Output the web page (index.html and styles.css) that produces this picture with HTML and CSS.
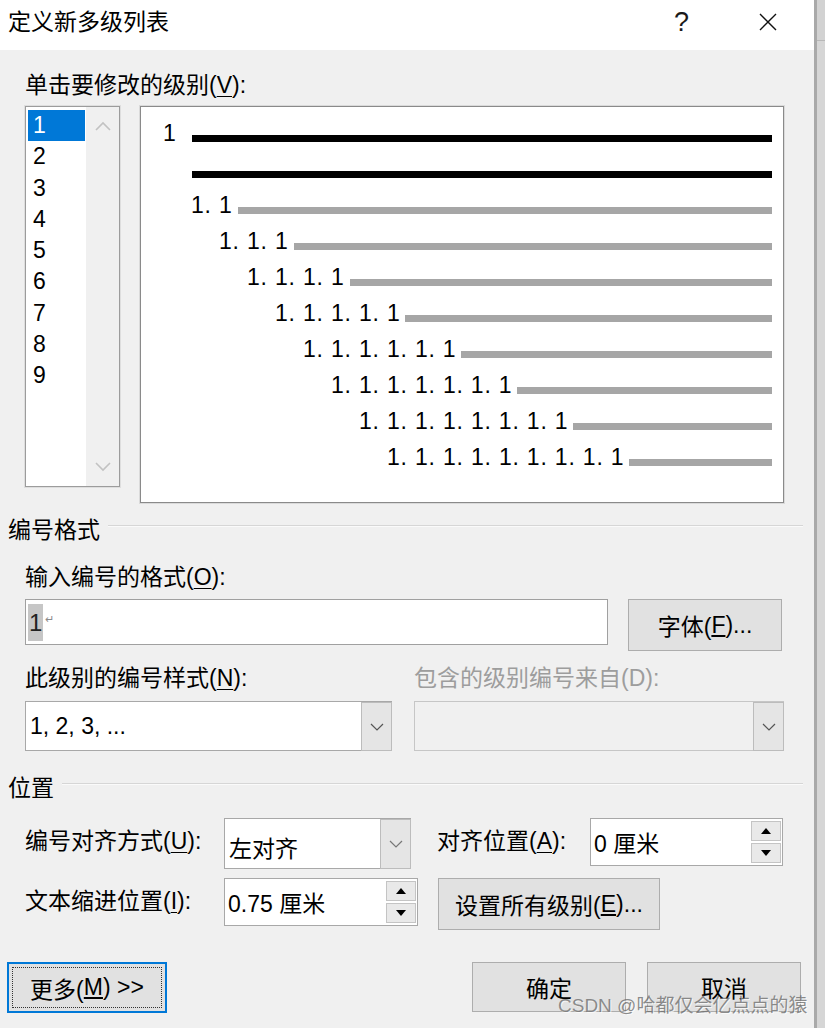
FILE: index.html
```html
<!DOCTYPE html>
<html lang="zh-CN">
<head>
    <meta charset="UTF-8">
    <meta name="viewport" content="width=device-width, initial-scale=1.0">
    <title>定义新多级列表</title>
    <link rel="stylesheet" href="styles.css">
</head>
<body>
<div class="screen">
    <div class="dialog">
        <div class="titlebar">
            <span class="title">定义新多级列表</span>
            <span class="help">?</span>
            <span class="close">
                <svg width="18" height="18" viewBox="0 0 18 18"><path d="M1 1 L17 17 M17 1 L1 17" stroke="#111" stroke-width="1.4" fill="none"/></svg>
            </span>
        </div>

        <div class="content">
            <div class="label top-label">单击要修改的级别(<u>V</u>):</div>
            <div class="level-area">
                <div class="level-list">
                    <ul class="levels">
                        <li class="selected">1</li>
                        <li>2</li>
                        <li>3</li>
                        <li>4</li>
                        <li>5</li>
                        <li>6</li>
                        <li>7</li>
                        <li>8</li>
                        <li>9</li>
                    </ul>
                    <div class="vscroll">
                        <svg width="16" height="10" viewBox="0 0 16 10"><polyline points="1,9 8,2 15,9" stroke="#c2c2c2" stroke-width="1.6" fill="none"/></svg>
                        <svg width="16" height="10" viewBox="0 0 16 10"><polyline points="1,1 8,8 15,1" stroke="#c2c2c2" stroke-width="1.6" fill="none"/></svg>
                    </div>
                </div>
                <div class="preview">
                    <div class="pv-row lv1"><span class="pv-num">1</span><span class="pv-line dark"></span></div>
                    <div class="pv-row lv1b"><span class="pv-line dark"></span></div>
                    <div class="pv-row lv2"><span class="pv-num">1. 1</span><span class="pv-line"></span></div>
                    <div class="pv-row lv3"><span class="pv-num">1. 1. 1</span><span class="pv-line"></span></div>
                    <div class="pv-row lv4"><span class="pv-num">1. 1. 1. 1</span><span class="pv-line"></span></div>
                    <div class="pv-row lv5"><span class="pv-num">1. 1. 1. 1. 1</span><span class="pv-line"></span></div>
                    <div class="pv-row lv6"><span class="pv-num">1. 1. 1. 1. 1. 1</span><span class="pv-line"></span></div>
                    <div class="pv-row lv7"><span class="pv-num">1. 1. 1. 1. 1. 1. 1</span><span class="pv-line"></span></div>
                    <div class="pv-row lv8"><span class="pv-num">1. 1. 1. 1. 1. 1. 1. 1</span><span class="pv-line"></span></div>
                    <div class="pv-row lv9"><span class="pv-num">1. 1. 1. 1. 1. 1. 1. 1. 1</span><span class="pv-line"></span></div>
                </div>
            </div>

            <div class="section section-format"><span>编号格式</span></div>
            <div class="group">
                <div class="label format-label">输入编号的格式(<u>O</u>):</div>
                <div class="format-row">
                    <div class="textbox format-box"><span class="sel">1</span><span class="para">↵</span></div>
                    <button class="btn font-btn">字体(<u>F</u>)...</button>
                </div>
                <div class="style-row">
                    <div class="style-col">
                        <div class="label">此级别的编号样式(<u>N</u>):</div>
                        <div class="combo">
                            <span class="combo-text">1, 2, 3, ...</span>
                            <span class="combo-btn">
                                <svg width="14" height="8" viewBox="0 0 14 8"><polyline points="1,1 7,7 13,1" stroke="#555" stroke-width="1.2" fill="none"/></svg>
                            </span>
                        </div>
                    </div>
                    <div class="style-col disabled">
                        <div class="label">包含的级别编号来自(D):</div>
                        <div class="combo">
                            <span class="combo-text"></span>
                            <span class="combo-btn">
                                <svg width="14" height="8" viewBox="0 0 14 8"><polyline points="1,1 7,7 13,1" stroke="#555" stroke-width="1.2" fill="none"/></svg>
                            </span>
                        </div>
                    </div>
                </div>
            </div>

            <div class="section section-pos"><span>位置</span></div>
            <div class="group">
                <div class="pos-row first">
                    <span class="label pos-label">编号对齐方式(<u>U</u>):</span>
                    <div class="combo align-combo">
                        <span class="combo-text">左对齐</span>
                        <span class="combo-btn">
                            <svg width="14" height="8" viewBox="0 0 14 8"><polyline points="1,1 7,7 13,1" stroke="#777" stroke-width="1.2" fill="none"/></svg>
                        </span>
                    </div>
                    <span class="label at-label">对齐位置(<u>A</u>):</span>
                    <div class="spin at-spin">
                        <span class="spin-text">0 厘米</span>
                        <span class="spin-btns">
                            <span class="spin-btn"><svg width="10" height="6" viewBox="0 0 10 6"><polygon points="0,6 5,0 10,6" fill="#000"/></svg></span>
                            <span class="spin-btn"><svg width="10" height="6" viewBox="0 0 10 6"><polygon points="0,0 5,6 10,0" fill="#000"/></svg></span>
                        </span>
                    </div>
                </div>
                <div class="pos-row second">
                    <span class="label pos-label">文本缩进位置(<u>I</u>):</span>
                    <div class="spin indent-spin">
                        <span class="spin-text">0.75 厘米</span>
                        <span class="spin-btns">
                            <span class="spin-btn"><svg width="10" height="6" viewBox="0 0 10 6"><polygon points="0,6 5,0 10,6" fill="#000"/></svg></span>
                            <span class="spin-btn"><svg width="10" height="6" viewBox="0 0 10 6"><polygon points="0,0 5,6 10,0" fill="#000"/></svg></span>
                        </span>
                    </div>
                    <button class="btn all-btn">设置所有级别(<u>E</u>)...</button>
                </div>
            </div>

            <div class="footer">
                <button class="btn more-btn"><span class="focus">更多(<u>M</u>) &gt;&gt;</span></button>
                <div class="footer-right">
                    <button class="btn ok-btn">确定</button>
                    <button class="btn ok-btn">取消</button>
                </div>
            </div>
        </div>

        <div class="watermark">CSDN @哈都仅会亿点点的猿</div>
    </div>
    <div class="behind"></div>
</div>
</body>
</html>
```

FILE: styles.css
```css
* { box-sizing: border-box; }

body {
    margin: 0;
    font-family: "Liberation Sans", "Noto Sans CJK SC", sans-serif;
    font-size: 23px;
    color: #000;
    background: #dcdcdc;
}

.screen {
    display: flex;
    width: 825px;
    height: 1028px;
    overflow: hidden;
}

.dialog {
    position: relative;
    width: 814px;
    height: 1028px;
    background: #f0f0f0;
    flex-shrink: 0;
}

.behind {
    flex: 1;
    border-left: 3px solid #a9a9a9;
    background: linear-gradient(#d2d2d2 0, #d2d2d2 40px, #b8b8b8 40px, #b8b8b8 41px, #d6d6d6 41px);
}

/* title bar */
.titlebar {
    height: 50px;
    background: #fff;
    display: flex;
    align-items: center;
    padding: 0 37px 6px 8px;
}
.title { line-height: 30px; }
.help {
    margin-left: auto;
    font-size: 27px;
    color: #1a1a1a;
    line-height: 30px;
}
.close {
    display: flex;
    margin-left: 70px;
}

/* content */
.content {
    padding: 0 13px 0 8px;
}
.label {
    line-height: 30px;
    white-space: nowrap;
}
.label u { text-decoration-thickness: 1px; text-underline-offset: 3px; }
.top-label {
    margin: 20px 0 0 17px;
}

.level-area {
    display: flex;
    align-items: flex-start;
    margin: 6px 0 0 17px;
}

.level-list {
    display: flex;
    width: 95px;
    height: 381px;
    background: #fff;
    border: 1px solid #9c9c9c;
    box-shadow: 0 0 0 1px #dedede;
}
.levels {
    list-style: none;
    margin: 0;
    padding: 3px 0 0 2px;
    width: 59px;
}
.levels li {
    height: 31.3px;
    line-height: 31.3px;
    padding-left: 5px;
}
.levels li.selected {
    background: #0078d7;
    color: #fff;
}
.vscroll {
    flex: 1;
    margin-left: 1px;
    background: #f0f0f0;
    display: flex;
    flex-direction: column;
    justify-content: space-between;
    align-items: center;
    padding: 14px 0;
}

.preview {
    margin-left: 20px;
    width: 644px;
    height: 397px;
    background: #fff;
    border: 1px solid #8a8a8a;
    box-shadow: 0 0 0 1px #dadada;
    padding: 13px 11px 0 0;
}
.pv-row {
    display: flex;
    align-items: center;
    height: 36px;
}
.pv-num {
    letter-spacing: 0.8px;
    line-height: 26px;
    margin-bottom: 11px;
    white-space: nowrap;
}
.pv-line {
    flex: 1;
    height: 7px;
    margin-left: 5px;
    background: #a6a6a6;
}
.pv-line.dark { background: #000; }
.lv1 { padding-left: 22px; }
.lv1 .pv-line { margin-left: 15px; }
.lv1b { padding-left: 51px; }
.lv1b .pv-line { margin-left: 0; }
.lv2 { padding-left: 50px; }
.lv3 { padding-left: 78px; }
.lv4 { padding-left: 106px; }
.lv5 { padding-left: 134px; }
.lv6 { padding-left: 162px; }
.lv7 { padding-left: 190px; }
.lv8 { padding-left: 218px; }
.lv9 { padding-left: 246px; }

/* section headers */
.section {
    display: flex;
    align-items: center;
    line-height: 30px;
    margin-right: -2px;
}
.section::after {
    content: "";
    flex: 1;
    margin: -8px 0 0 8px;
    border-top: 1px solid #d6d6d6;
    border-bottom: 1px solid #fafafa;
}
.section-format { margin-top: 12px; }
.section-pos { margin-top: 22px; }

.group { padding-left: 17px; }
.format-label { margin-top: 17px; }

.format-row {
    display: flex;
    align-items: flex-start;
    margin-top: 7px;
}
.textbox {
    background: #fff;
    border: 1px solid #a0a0a0;
}
.format-box {
    width: 583px;
    height: 46px;
    display: flex;
    align-items: center;
    padding-left: 2px;
}
.sel {
    background: #c6c6c6;
    color: #222;
    height: 37px;
    line-height: 37px;
    padding: 0 1px;
    font-size: 24px;
}
.para {
    font-size: 11px;
    color: #8a8a8a;
    align-self: flex-start;
    margin: 13px 0 0 2px;
}

.btn {
    font-family: inherit;
    font-size: 23px;
    color: #000;
    background: #e1e1e1;
    border: 1px solid #adadad;
    padding: 0;
    display: flex;
    align-items: center;
    justify-content: center;
}
.font-btn {
    width: 154px;
    height: 52px;
    margin-left: 20px;
}

.style-row {
    display: flex;
    margin-top: 12px;
}
.style-col {
    display: flex;
    flex-direction: column;
    width: 367px;
}
.style-col .combo { margin-top: 8px; }
.style-col.disabled {
    width: 370px;
    margin-left: 22px;
}
.style-col.disabled .label { color: #9d9d9d; }

.combo {
    display: flex;
    height: 50px;
    background: #fff;
    border: 1px solid #a8a8a8;
}
.combo-text {
    flex: 1;
    display: flex;
    align-items: center;
    padding-left: 4px;
    white-space: nowrap;
}
.combo-btn {
    width: 31px;
    display: flex;
    align-items: center;
    justify-content: center;
    background: #e5e5e5;
    border: 1px solid #bcbcbc;
    margin: 0 -1px -1px 0;
}
.disabled .combo {
    background: #f0f0f0;
    border-color: #c6c6c6;
}

.pos-row {
    display: flex;
    align-items: center;
}
.pos-row.first { margin-top: 15px; height: 51px; }
.pos-row.second { margin-top: 9px; height: 52px; }
.pos-label { width: 199px; margin-top: -6px; }
.align-combo {
    width: 187px;
    height: 51px;
}
.align-combo .combo-text { padding-top: 6px; }
.at-label {
    width: 153px;
    margin-left: 26px;
    margin-top: -6px;
}

.spin {
    display: flex;
    height: 48px;
    background: #fff;
    border: 1px solid #a8a8a8;
}
.at-spin { width: 193px; align-self: flex-start; }
.indent-spin { width: 194px; align-self: flex-start; }
.spin-text {
    flex: 1;
    display: flex;
    align-items: center;
    padding-left: 3px;
    white-space: nowrap;
}
.spin-btns {
    width: 31px;
    display: flex;
    flex-direction: column;
    gap: 2px;
    padding: 2px 1px 2px 0;
}
.spin-btn {
    flex: 1;
    display: flex;
    align-items: center;
    justify-content: center;
    background: #e9e9e9;
    border: 1px solid #c4c4c4;
}
.all-btn {
    width: 222px;
    height: 52px;
    margin-left: 20px;
}

.footer {
    display: flex;
    justify-content: space-between;
    margin: 32px 0 0 -1px;
}
.more-btn {
    width: 160px;
    height: 51px;
    border: 2px solid #0078d7;
    padding: 3px;
}
.more-btn .focus {
    width: 100%;
    height: 100%;
    display: flex;
    align-items: center;
    justify-content: center;
    border: 1px dotted #333;
}
.footer-right {
    display: flex;
    gap: 21px;
}
.ok-btn {
    width: 154px;
    height: 50px;
}

.watermark {
    position: absolute;
    left: 558px;
    top: 993px;
    font-size: 19px;
    line-height: 26px;
    color: rgba(105, 105, 105, 0.75);
    text-shadow: 1px 1px 0 rgba(255, 255, 255, 0.7);
    white-space: nowrap;
}
```
